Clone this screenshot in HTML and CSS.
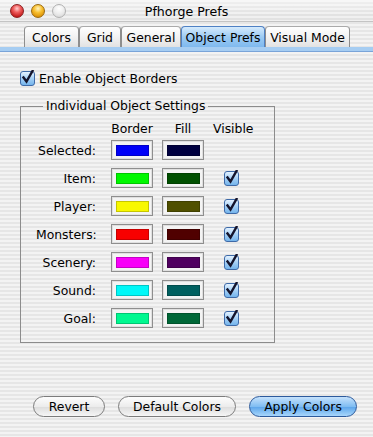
FILE: index.html
```html
<!DOCTYPE html>
<html lang="en">
<head>
  <meta charset="UTF-8" />
  <title>Pfhorge Prefs</title>
  <link rel="stylesheet" href="styles.css">
</head>
<body>
  <div class="window">
    <div class="titlebar">
      <div class="lights">
        <span class="light close"></span>
        <span class="light minimize"></span>
        <span class="light zoom"></span>
      </div>
      <div class="title">Pfhorge Prefs</div>
      <div></div>
    </div>

    <div class="tabs">
      <div class="tab tab-colors">Colors</div>
      <div class="tab tab-grid">Grid</div>
      <div class="tab tab-general">General</div>
      <div class="tab tab-objects selected">Object Prefs</div>
      <div class="tab tab-visual">Visual Mode</div>
    </div>

    <div class="pane">
      <label class="check-row">
        <span class="checkbox"><svg viewBox="0 0 15 15" width="15" height="15"><path d="M3.5 7.5 L6.5 11.5 L12.5 1" /></svg></span>
        Enable Object Borders
      </label>

      <fieldset class="group">
        <legend>Individual Object Settings</legend>
        <div class="row head"><span></span><span>Border</span><span>Fill</span><span>Visible</span></div>
        <div class="rows">
          <div class="row">
            <span class="label">Selected:</span>
            <span class="well"><span class="swatch" style="background:#0000f8"></span></span>
            <span class="well"><span class="swatch" style="background:#000040"></span></span>
            <span></span>
          </div>
          <div class="row">
            <span class="label">Item:</span>
            <span class="well"><span class="swatch" style="background:#00f800"></span></span>
            <span class="well"><span class="swatch" style="background:#005000"></span></span>
            <span class="checkbox"><svg viewBox="0 0 15 15" width="15" height="15"><path d="M3.5 7.5 L6.5 11.5 L12.5 1" /></svg></span>
          </div>
          <div class="row">
            <span class="label">Player:</span>
            <span class="well"><span class="swatch" style="background:#f8f800"></span></span>
            <span class="well"><span class="swatch" style="background:#505000"></span></span>
            <span class="checkbox"><svg viewBox="0 0 15 15" width="15" height="15"><path d="M3.5 7.5 L6.5 11.5 L12.5 1" /></svg></span>
          </div>
          <div class="row">
            <span class="label">Monsters:</span>
            <span class="well"><span class="swatch" style="background:#f80000"></span></span>
            <span class="well"><span class="swatch" style="background:#500000"></span></span>
            <span class="checkbox"><svg viewBox="0 0 15 15" width="15" height="15"><path d="M3.5 7.5 L6.5 11.5 L12.5 1" /></svg></span>
          </div>
          <div class="row">
            <span class="label">Scenery:</span>
            <span class="well"><span class="swatch" style="background:#f800f8"></span></span>
            <span class="well"><span class="swatch" style="background:#500060"></span></span>
            <span class="checkbox"><svg viewBox="0 0 15 15" width="15" height="15"><path d="M3.5 7.5 L6.5 11.5 L12.5 1" /></svg></span>
          </div>
          <div class="row">
            <span class="label">Sound:</span>
            <span class="well"><span class="swatch" style="background:#00f8f8"></span></span>
            <span class="well"><span class="swatch" style="background:#006060"></span></span>
            <span class="checkbox"><svg viewBox="0 0 15 15" width="15" height="15"><path d="M3.5 7.5 L6.5 11.5 L12.5 1" /></svg></span>
          </div>
          <div class="row">
            <span class="label">Goal:</span>
            <span class="well"><span class="swatch" style="background:#00f890"></span></span>
            <span class="well"><span class="swatch" style="background:#006838"></span></span>
            <span class="checkbox"><svg viewBox="0 0 15 15" width="15" height="15"><path d="M3.5 7.5 L6.5 11.5 L12.5 1" /></svg></span>
          </div>
        </div>
      </fieldset>

      <div class="buttons">
        <button class="btn revert">Revert</button>
        <button class="btn defaults">Default Colors</button>
        <button class="btn default">Apply Colors</button>
      </div>
    </div>
  </div>
</body>
</html>
```

FILE: styles.css
```css
/* Basic Reset */
* {
  margin: 0;
  padding: 0;
  box-sizing: border-box;
}
body {
  font-family: "DejaVu Sans", "Liberation Sans", sans-serif;
  font-size: 12.4px;
  color: #000;
  background: #ececec;
}
.window {
  width: 373px;
  height: 437px;
  display: flex;
  flex-direction: column;
  background: repeating-linear-gradient(#f3f3f3 0 2px, #e6e6e6 2px 4px);
  overflow: hidden;
}

/* Title bar */
.titlebar {
  height: 22px;
  display: grid;
  grid-template-columns: 1fr auto 1fr;
  align-items: center;
  background:
    linear-gradient(rgba(255,255,255,0.5), rgba(255,255,255,0) 70%),
    repeating-linear-gradient(#f0f0f0 0 2px, #e2e2e2 2px 4px);
  border-bottom: 1px solid #c4c4c4;
}
.title {
  font-size: 12.6px;
  padding-top: 1px;
}
.lights {
  display: flex;
  gap: 7px;
  padding-left: 10px;
}
.light {
  width: 14px;
  height: 14px;
  border-radius: 50%;
  border: 1px solid #8a8a8a;
}
.light.close {
  background: radial-gradient(circle at 50% 30%, #ffd0d0 0, #f06060 35%, #c01818 80%);
  border-color: #8a2020;
}
.light.minimize {
  background: radial-gradient(circle at 50% 30%, #fff4c0 0, #f8c030 40%, #d88a00 85%);
  border-color: #9a6a10;
}
.light.zoom {
  background: radial-gradient(circle at 50% 30%, #ffffff 0, #ececec 50%, #d6d6d6 90%);
  border-color: #b0b0b0;
}

/* Tabs */
.tabs {
  display: flex;
  padding: 4px 0 0 24px;
  border-bottom: 4px solid #a6cdf2;
  box-shadow: 0 1px 0 #6b97cf;
}
.tab {
  flex-shrink: 0;
  white-space: nowrap;
  text-align: center;
  height: 21px;
  padding-top: 3px;
  border: 1px solid #8e8e8e;
  border-bottom: none;
  border-top-color: #aaa;
  border-radius: 4px 4px 0 0;
  background: linear-gradient(#ffffff, #f2f2f2 50%, #e2e2e2);
}
.tab-colors { width: 55px; }
.tab-grid { width: 42px; }
.tab-general { width: 60px; }
.tab-objects { width: 84px; }
.tab-visual { width: 85px; }
.tab.selected {
  background: linear-gradient(#d6ebfd, #9ccbf3 50%, #7fb9ee);
  border-color: #4f81c4;
}

/* Pane */
.pane {
  flex: 1;
  display: flex;
  flex-direction: column;
  padding: 18px 0 20px 20px;
  border-top: 1px solid #7aa4d8;
}
.check-row {
  display: flex;
  align-items: center;
  gap: 4px;
  height: 16px;
}
.checkbox {
  width: 15px;
  height: 15px;
  display: inline-block;
  border: 1px solid #3e6aa8;
  border-radius: 3px;
  background: linear-gradient(#e4f2ff, #a5d0f6 50%, #74b4ec);
  position: relative;
}
.checkbox svg {
  position: absolute;
  left: -1px;
  top: -2px;
  fill: none;
  stroke: #14142c;
  stroke-width: 2.4;
  stroke-linecap: square;
}

/* Group box */
.group {
  width: 255px;
  margin-top: 13px;
  border: 1px solid #8c8c8c;
  padding: 9px 0 14px 15px;
}
.group legend {
  margin-left: 7px;
  padding: 0 3px;
  line-height: 14px;
}
.rows {
  display: flex;
  flex-direction: column;
  gap: 8px;
}
.row {
  display: grid;
  grid-template-columns: 66px 42px 42px 37px;
  column-gap: 9px;
  align-items: center;
  height: 20px;
}
.row.head {
  height: 14px;
  margin-bottom: 4px;
  text-align: center;
}
.row.head span {
  line-height: 14px;
}
.label {
  text-align: right;
  padding-right: 6px;
}
.well {
  height: 20px;
  border: 1px solid #8e8e8e;
  background: #f4f4f4;
  box-shadow: inset 0 0 0 1px #e0e0e0;
  display: flex;
  align-items: center;
  justify-content: center;
}
.swatch {
  width: 33px;
  height: 11px;
  border: 1px solid rgba(0,0,0,0.2);
}
.row .checkbox {
  justify-self: center;
}

/* Buttons */
.buttons {
  margin-top: auto;
  display: flex;
  justify-content: flex-end;
  gap: 13px;
  padding-right: 16px;
}
.btn {
  font-family: inherit;
  font-size: 12.4px;
  white-space: nowrap;
  height: 21px;
  padding: 0 8px;
  border: 1px solid #7c7c7c;
  border-radius: 11px;
  background: linear-gradient(#fdfdfd, #ececec 50%, #dcdcdc 51%, #f6f6f6);
  color: #000;
}
.btn.revert {
  width: 72px;
}
.btn.defaults {
  width: 118px;
}
.btn.default {
  width: 108px;
  border-color: #2c5a9c;
  background: linear-gradient(#c6e2fc, #80bdf2 50%, #5aa4ea 51%, #a8d6fb);
}
```
